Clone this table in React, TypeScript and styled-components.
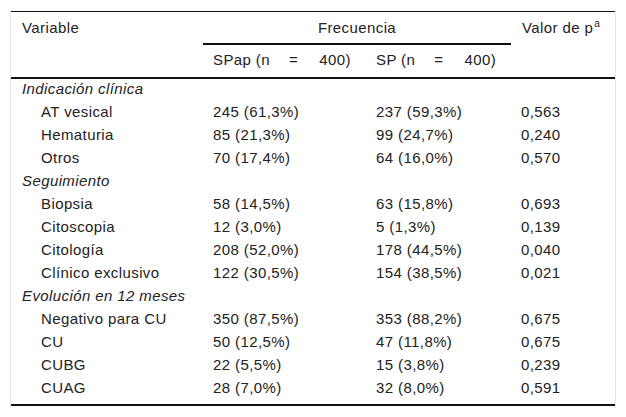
import React from "react";
import styled, { createGlobalStyle } from "styled-components";

type Row = { label: string; spap: string; sp: string; p: string };
type Group = { title: string; rows: Row[] };

const groups: Group[] = [
  {
    title: "Indicación clínica",
    rows: [
      { label: "AT vesical", spap: "245 (61,3%)", sp: "237 (59,3%)", p: "0,563" },
      { label: "Hematuria", spap: "85 (21,3%)", sp: "99 (24,7%)", p: "0,240" },
      { label: "Otros", spap: "70 (17,4%)", sp: "64 (16,0%)", p: "0,570" },
    ],
  },
  {
    title: "Seguimiento",
    rows: [
      { label: "Biopsia", spap: "58 (14,5%)", sp: "63 (15,8%)", p: "0,693" },
      { label: "Citoscopia", spap: "12 (3,0%)", sp: "5 (1,3%)", p: "0,139" },
      { label: "Citología", spap: "208 (52,0%)", sp: "178 (44,5%)", p: "0,040" },
      { label: "Clínico exclusivo", spap: "122 (30,5%)", sp: "154 (38,5%)", p: "0,021" },
    ],
  },
  {
    title: "Evolución en 12 meses",
    rows: [
      { label: "Negativo para CU", spap: "350 (87,5%)", sp: "353 (88,2%)", p: "0,675" },
      { label: "CU", spap: "50 (12,5%)", sp: "47 (11,8%)", p: "0,675" },
      { label: "CUBG", spap: "22 (5,5%)", sp: "15 (3,8%)", p: "0,239" },
      { label: "CUAG", spap: "28 (7,0%)", sp: "32 (8,0%)", p: "0,591" },
    ],
  },
];

export default function App() {
  const lastGroup = groups.length - 1;

  return (
    <>
      <GlobalStyle />
      <Wrapper>
        <Table>
          <colgroup>
            <col style={{ width: 192 }} />
            <col style={{ width: 163 }} />
            <col style={{ width: 145 }} />
            <col style={{ width: 104 }} />
          </colgroup>
          <thead>
            <tr>
              <HeadCell rowSpan={2}>Variable</HeadCell>
              <SpanCell colSpan={2}>Frecuencia</SpanCell>
              <HeadCell rowSpan={2}>
                Valor de p<Sup>a</Sup>
              </HeadCell>
            </tr>
            <tr>
              <SubCell>
                SPap (n<Eq>=</Eq>400)
              </SubCell>
              <SubCell>
                SP (n<Eq>=</Eq>400)
              </SubCell>
            </tr>
          </thead>
          <tbody>
            {groups.map((group, gi) => (
              <React.Fragment key={group.title}>
                <tr>
                  <GroupCell colSpan={4}>{group.title}</GroupCell>
                </tr>
                {group.rows.map((row, ri) => {
                  const last = gi === lastGroup && ri === group.rows.length - 1;
                  return (
                    <tr key={row.label}>
                      <Cell $indent $last={last}>
                        {row.label}
                      </Cell>
                      <Cell $last={last}>{row.spap}</Cell>
                      <Cell $last={last}>{row.sp}</Cell>
                      <Cell $last={last}>{row.p}</Cell>
                    </tr>
                  );
                })}
              </React.Fragment>
            ))}
          </tbody>
        </Table>
      </Wrapper>
    </>
  );
}

const GlobalStyle = createGlobalStyle`
  html, body {
    margin: 0;
    padding: 0;
    background: #fff;
  }

  body {
    font-family: "Liberation Sans", Arial, sans-serif;
    font-size: 15px;
    letter-spacing: 0.4px;
    color: #222;
  }
`;

const Wrapper = styled.div`
  margin: 11px 0 0 10px;
  width: 606px;
  box-sizing: border-box;
  border-left: 1px solid #e6e6e6;
  border-right: 1px solid #e6e6e6;
  padding-bottom: 2px;
`;

const Table = styled.table`
  width: 604px;
  table-layout: fixed;
  border-collapse: separate;
  border-spacing: 0;
  border-top: 1px solid #111;
  border-bottom: 2px solid #111;
  font-size: 15px;
  line-height: 16px;
`;

const HeadCell = styled.th`
  font-weight: normal;
  text-align: left;
  vertical-align: top;
  padding: 8px 0 0 11px;
  border-bottom: 2px solid #111;
  white-space: nowrap;
`;

const SpanCell = styled.th`
  font-weight: normal;
  text-align: center;
  padding: 8px 10px 7px;
  border-bottom: 2px solid #111;
`;

const SubCell = styled.th`
  font-weight: normal;
  text-align: left;
  padding: 7px 0 9px 10px;
  border-bottom: 2px solid #111;
  white-space: nowrap;
`;

const Eq = styled.span`
  margin: 0 21px 0 19px;
`;

const Sup = styled.sup`
  font-size: 10px;
  line-height: 0;
  vertical-align: 6px;
  margin-left: 1px;
`;

const GroupCell = styled.td`
  font-style: italic;
  padding: 2px 10px 5px 11px;
  white-space: nowrap;
`;

const Cell = styled.td<{ $indent?: boolean; $last?: boolean }>`
  padding: 2px 0 ${(p) => (p.$last ? "8px" : "5px")}
    ${(p) => (p.$indent ? "30px" : "10px")};
  white-space: nowrap;
`;
